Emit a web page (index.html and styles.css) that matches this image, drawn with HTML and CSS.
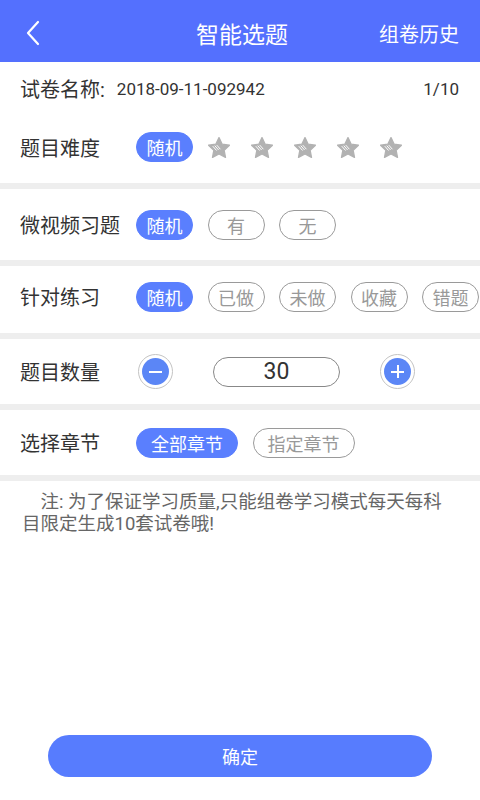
FILE: index.html
```html
<!DOCTYPE html>
<html lang="zh-CN">
<head>
    <meta charset="UTF-8">
    <meta name="viewport" content="width=device-width, initial-scale=1.0">
    <title>智能选题</title>
    <link rel="stylesheet" href="styles.css">
</head>
<body>
    <header class="topbar">
        <a class="back" href="#">
            <svg width="16" height="26" viewBox="0 0 16 26"><path d="M13 2 L3 13 L13 24" fill="none" stroke="#fff" stroke-width="2.2" stroke-linecap="round" stroke-linejoin="round"/></svg>
        </a>
        <h1 class="title">智能选题</h1>
        <a class="history" href="#">组卷历史</a>
    </header>

    <main class="form">
        <section class="group">
            <div class="row row-name">
                <span class="label">试卷名称:</span>
                <span class="paper-name">2018-09-11-092942</span>
                <span class="count">1/10</span>
            </div>
            <div class="row row-level">
                <span class="label">题目难度</span>
                <div class="options stars">
                    <span class="pill active">随机</span>
                    <svg class="star" viewBox="2 2 20 19"><path d="M12 2.5l2.9 6 6.6.9-4.8 4.6 1.2 6.5L12 17.4l-5.9 3.1 1.2-6.5-4.8-4.6 6.6-.9z" fill="#b2b2b2" stroke="#b2b2b2" stroke-width="1.2" stroke-linejoin="round"/><path d="M6.6 10.6l3 3.4M8.4 10.1l3 3.4M10.2 9.6l2.8 3.2" stroke="#fff" stroke-width="0.9" stroke-linecap="round"/></svg>
                    <svg class="star" viewBox="2 2 20 19"><path d="M12 2.5l2.9 6 6.6.9-4.8 4.6 1.2 6.5L12 17.4l-5.9 3.1 1.2-6.5-4.8-4.6 6.6-.9z" fill="#b2b2b2" stroke="#b2b2b2" stroke-width="1.2" stroke-linejoin="round"/><path d="M6.6 10.6l3 3.4M8.4 10.1l3 3.4M10.2 9.6l2.8 3.2" stroke="#fff" stroke-width="0.9" stroke-linecap="round"/></svg>
                    <svg class="star" viewBox="2 2 20 19"><path d="M12 2.5l2.9 6 6.6.9-4.8 4.6 1.2 6.5L12 17.4l-5.9 3.1 1.2-6.5-4.8-4.6 6.6-.9z" fill="#b2b2b2" stroke="#b2b2b2" stroke-width="1.2" stroke-linejoin="round"/><path d="M6.6 10.6l3 3.4M8.4 10.1l3 3.4M10.2 9.6l2.8 3.2" stroke="#fff" stroke-width="0.9" stroke-linecap="round"/></svg>
                    <svg class="star" viewBox="2 2 20 19"><path d="M12 2.5l2.9 6 6.6.9-4.8 4.6 1.2 6.5L12 17.4l-5.9 3.1 1.2-6.5-4.8-4.6 6.6-.9z" fill="#b2b2b2" stroke="#b2b2b2" stroke-width="1.2" stroke-linejoin="round"/><path d="M6.6 10.6l3 3.4M8.4 10.1l3 3.4M10.2 9.6l2.8 3.2" stroke="#fff" stroke-width="0.9" stroke-linecap="round"/></svg>
                    <svg class="star" viewBox="2 2 20 19"><path d="M12 2.5l2.9 6 6.6.9-4.8 4.6 1.2 6.5L12 17.4l-5.9 3.1 1.2-6.5-4.8-4.6 6.6-.9z" fill="#b2b2b2" stroke="#b2b2b2" stroke-width="1.2" stroke-linejoin="round"/><path d="M6.6 10.6l3 3.4M8.4 10.1l3 3.4M10.2 9.6l2.8 3.2" stroke="#fff" stroke-width="0.9" stroke-linecap="round"/></svg>
                </div>
            </div>
        </section>

        <section class="group">
            <div class="row row-tall">
                <span class="label">微视频习题</span>
                <div class="options">
                    <span class="pill active">随机</span>
                    <span class="pill">有</span>
                    <span class="pill">无</span>
                </div>
            </div>
        </section>

        <section class="group">
            <div class="row row-mid">
                <span class="label">针对练习</span>
                <div class="options">
                    <span class="pill active">随机</span>
                    <span class="pill">已做</span>
                    <span class="pill">未做</span>
                    <span class="pill">收藏</span>
                    <span class="pill">错题</span>
                </div>
            </div>
        </section>

        <section class="group">
            <div class="row">
                <span class="label">题目数量</span>
                <div class="stepper">
                    <span class="step-btn"><span class="step-dot minus"></span></span>
                    <span class="step-value">30</span>
                    <span class="step-btn"><span class="step-dot plus"></span></span>
                </div>
            </div>
        </section>

        <section class="group">
            <div class="row">
                <span class="label">选择章节</span>
                <div class="options">
                    <span class="pill wide active">全部章节</span>
                    <span class="pill wide">指定章节</span>
                </div>
            </div>
        </section>

        <p class="note">　注: 为了保证学习质量,只能组卷学习模式每天每科目限定生成10套试卷哦!</p>
    </main>

    <div class="actions">
        <button class="confirm">确定</button>
    </div>
</body>
</html>
```

FILE: styles.css
```css
body {
    margin: 0;
    width: 480px;
    height: 800px;
    display: flex;
    flex-direction: column;
    background-color: #fff;
    color: #333;
    font-family: Roboto, "Noto Sans CJK SC", sans-serif;
    overflow: hidden;
}

/* top bar */
.topbar {
    height: 62px;
    box-sizing: border-box;
    padding: 4px 21px 0 25px;
    background-color: #5470fe;
    display: flex;
    align-items: center;
    color: #fff;
}

.back {
    width: 90px;
    display: flex;
}

.title {
    flex: 1;
    margin: 0;
    text-align: center;
    font-size: 23px;
    font-weight: normal;
}

.history {
    width: 90px;
    text-align: right;
    color: #fff;
    text-decoration: none;
    font-size: 20px;
}

/* form rows */
.group {
    border-bottom: 6px solid #eeeeee;
}

.row {
    height: 65px;
    display: flex;
    align-items: center;
    padding-left: 20px;
}

.row-name {
    height: 53px;
    padding-right: 21px;
    box-sizing: border-box;
}

.row-level {
    height: 68px;
    padding-bottom: 4px;
    box-sizing: border-box;
}

.row-tall {
    height: 71px;
}

.row-mid {
    height: 67px;
    padding-bottom: 6px;
    box-sizing: border-box;
}

.label {
    width: 116px;
    flex-shrink: 0;
    font-size: 20px;
    color: #333;
}

.row-name .label {
    width: auto;
}

.paper-name {
    margin-left: 12px;
    font-size: 17px;
    flex: 1;
}

.count {
    font-size: 17px;
}

.options {
    display: flex;
    align-items: center;
    gap: 14.5px;
}

.stars {
    gap: 21px;
}

.stars .pill {
    margin-right: -6px;
    margin-top: -1px;
}

.star {
    width: 22px;
    height: 21px;
}

.pill {
    width: 57px;
    height: 30px;
    box-sizing: border-box;
    border: 1.3px solid #9a9a9a;
    border-radius: 15px;
    display: flex;
    align-items: center;
    justify-content: center;
    font-size: 18px;
    color: #999;
    flex-shrink: 0;
}

.pill.wide {
    width: 102px;
}

.pill.active {
    background-color: #5a7ffe;
    border-color: #5a7ffe;
    color: #fff;
}

/* count stepper */
.stepper {
    display: flex;
    align-items: center;
    margin-left: 2px;
}

.step-btn {
    width: 35px;
    height: 35px;
    box-sizing: border-box;
    border: 1px solid #c4c4c4;
    border-radius: 50%;
    display: flex;
    align-items: center;
    justify-content: center;
}

.step-dot {
    width: 27px;
    height: 27px;
    border-radius: 50%;
    background-color: #5b86f6;
    position: relative;
}

.step-dot::before,
.plus::after {
    content: "";
    position: absolute;
    left: 7px;
    top: 12.5px;
    width: 13px;
    height: 2px;
    background-color: #fff;
}

.plus::after {
    left: 12.5px;
    top: 7px;
    width: 2px;
    height: 13px;
}

.step-value {
    width: 127px;
    height: 30px;
    margin: 0 40px 0 40px;
    box-sizing: border-box;
    border: 1.3px solid #888;
    border-radius: 15px;
    display: flex;
    align-items: center;
    justify-content: center;
    font-size: 23px;
    color: #333;
}

/* note */
.note {
    margin: 0;
    padding: 10px 22px 0 22px;
    font-size: 18.5px;
    line-height: 22px;
    color: #666;
}

/* bottom button */
.actions {
    margin-top: auto;
    padding: 0 48px 23px;
}

.confirm {
    width: 100%;
    height: 42px;
    border: none;
    border-radius: 21px;
    background-color: #577cfe;
    color: #fff;
    font-family: Roboto, "Noto Sans CJK SC", sans-serif;
    font-size: 18px;
}
```
